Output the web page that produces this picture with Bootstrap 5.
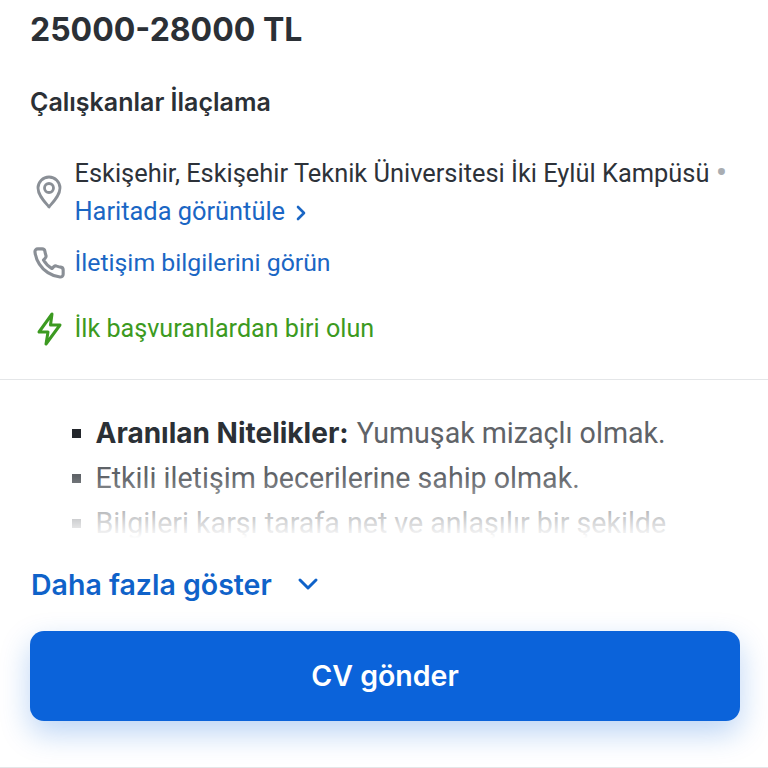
<!DOCTYPE html>
<html lang="tr">
<head>
    <meta charset="UTF-8">
    <meta name="viewport" content="width=device-width, initial-scale=1.0">
    <title>CV gönder</title>
    <link href="https://cdn.jsdelivr.net/npm/bootstrap@5.3.0/dist/css/bootstrap.min.css" rel="stylesheet">
    <style>
        body { height: 768px; overflow: hidden; background: #fff; font-family: Roboto, "Liberation Sans", sans-serif; color: #2d3239; }
        .job-top { padding: 8px 30px 0; height: 379px; }
        .job-salary { font-family: Inter, sans-serif; font-weight: 700; font-size: 32px; line-height: 44px; margin: 0; color: #2b3036; }
        .job-company { font-family: Inter, sans-serif; font-weight: 600; font-size: 25px; line-height: 32px; margin: 34px 0 0; color: #2b3036; }
        .info-row { font-size: 25.4px; line-height: 38px; }
        .info-icon { width: 38px; flex: none; margin-right: 6.5px; }
        .info-place { margin-top: 36px; }
        .info-phone { margin-top: 14px; font-size: 24.8px; }
        .info-first { margin-top: 28px; color: #3c9a21; font-size: 25.15px; }
        .blue-link { color: #1a66c4; text-decoration: none; }
        .dot-sep { color: #a9adb2; font-size: 34px; line-height: 20px; vertical-align: -2px; }
        .job-desc { border-top: 1px solid #e4e6e8; height: 189px; overflow: hidden; padding-top: 31px; position: relative; }
        .desc-list { list-style: none; margin: 0; padding: 0 0 0 71.5px; font-size: 28.6px; line-height: 45px; color: #5f6368; }
        .desc-list li { display: flex; align-items: center; }
        .desc-list li::before { content: ""; width: 9px; height: 9px; background: #5f6368; margin-right: 15px; flex: none; }
        .desc-list li:first-child::before { background: #23272c; }
        .desc-list b { color: #2b3036; font-family: Inter, sans-serif; font-weight: 700; font-size: 28px; margin-right: 8px; }
        .desc-fade { position: absolute; left: 0; right: 0; bottom: 0; height: 92px; background: linear-gradient(rgba(255,255,255,0), #fff 68%); }
        .more-row { padding: 0 31px; height: 36px; margin-top: -1px; font-family: Inter, sans-serif; font-weight: 600; font-size: 28.5px; color: #0f62c9; }
        .more-row svg { margin-left: 24px; }
        .send-wrap { padding: 28px 28px 0 30px; height: 165px; border-bottom: 1px solid #e4e6e8; }
        .send-btn { width: 100%; height: 90px; background: #0b63da; border: 0; border-radius: 14px; color: #fff; font-family: Inter, sans-serif; font-weight: 600; font-size: 28.5px; box-shadow: 0 12px 30px rgba(11, 99, 218, .28); }
    </style>
</head>
<body>
    <!-- Ust bilgi -->
    <div class="job-top">
        <h1 class="job-salary">25000-28000 TL</h1>
        <h2 class="job-company">Çalışkanlar İlaçlama</h2>

        <div class="info-row info-place d-flex align-items-center">
            <span class="info-icon d-flex justify-content-center">
                <svg width="28" height="34" viewBox="0 0 28 34" fill="none" stroke="#8a8f96" stroke-width="2.8" stroke-linejoin="round"><path d="M14 32 C9 26 3 20 3 13 a11 11 0 0 1 22 0 C25 20 19 26 14 32 Z"/><circle cx="14" cy="13" r="4.5"/></svg>
            </span>
            <div>
                <div class="text-nowrap">Eskişehir, Eskişehir Teknik Üniversitesi İki Eylül Kampüsü <span class="dot-sep">•</span></div>
                <a class="blue-link" href="#">Haritada görüntüle
                    <svg class="ms-1" width="12" height="18" viewBox="0 0 12 18" fill="none" stroke="#1a66c4" stroke-width="2.6" stroke-linecap="round" stroke-linejoin="round"><path d="M3 3l6 6-6 6"/></svg>
                </a>
            </div>
        </div>

        <div class="info-row info-phone d-flex align-items-center">
            <span class="info-icon d-flex justify-content-center">
                <svg width="34" height="34" viewBox="0 0 24 24" fill="none" stroke="#8a8f96" stroke-width="2.2" stroke-linecap="round" stroke-linejoin="round"><path d="M22 16.9v3a2 2 0 0 1-2.2 2 19.8 19.8 0 0 1-8.6-3.1 19.5 19.5 0 0 1-6-6A19.8 19.8 0 0 1 2.1 4.2 2 2 0 0 1 4.1 2h3a2 2 0 0 1 2 1.7c.1 1 .4 1.9.7 2.8a2 2 0 0 1-.5 2.1L8.1 9.9a16 16 0 0 0 6 6l1.3-1.3a2 2 0 0 1 2.1-.4c.9.3 1.8.6 2.8.7a2 2 0 0 1 1.7 2z"/></svg>
            </span>
            <a class="blue-link" href="#">İletişim bilgilerini görün</a>
        </div>

        <div class="info-row info-first d-flex align-items-center">
            <span class="info-icon d-flex justify-content-center">
                <svg width="28" height="34" viewBox="0 0 28 34" fill="none" stroke="#3c9a21" stroke-width="3" stroke-linejoin="round"><path d="M17 2 L4 20 H13 L11 32 L25 13 H15.5 Z"/></svg>
            </span>
            <span>İlk başvuranlardan biri olun</span>
        </div>
    </div>

    <!-- Aciklama -->
    <div class="job-desc">
        <ul class="desc-list">
            <li><b>Aranılan Nitelikler:</b> Yumuşak mizaçlı olmak.</li>
            <li>Etkili iletişim becerilerine sahip olmak.</li>
            <li>Bilgileri karşı tarafa net ve anlaşılır bir şekilde</li>
        </ul>
        <div class="desc-fade"></div>
    </div>

    <div class="more-row d-flex align-items-center">
        <span>Daha fazla göster</span>
        <svg width="24" height="16" viewBox="0 0 24 16" fill="none" stroke="#0f62c9" stroke-width="3" stroke-linecap="round" stroke-linejoin="round"><path d="M4 3l8 8 8-8"/></svg>
    </div>

    <div class="send-wrap">
        <button type="button" class="btn send-btn">CV gönder</button>
    </div>

    <script src="https://cdn.jsdelivr.net/npm/bootstrap@5.3.0/dist/js/bootstrap.bundle.min.js"></script>
</body>
</html>
